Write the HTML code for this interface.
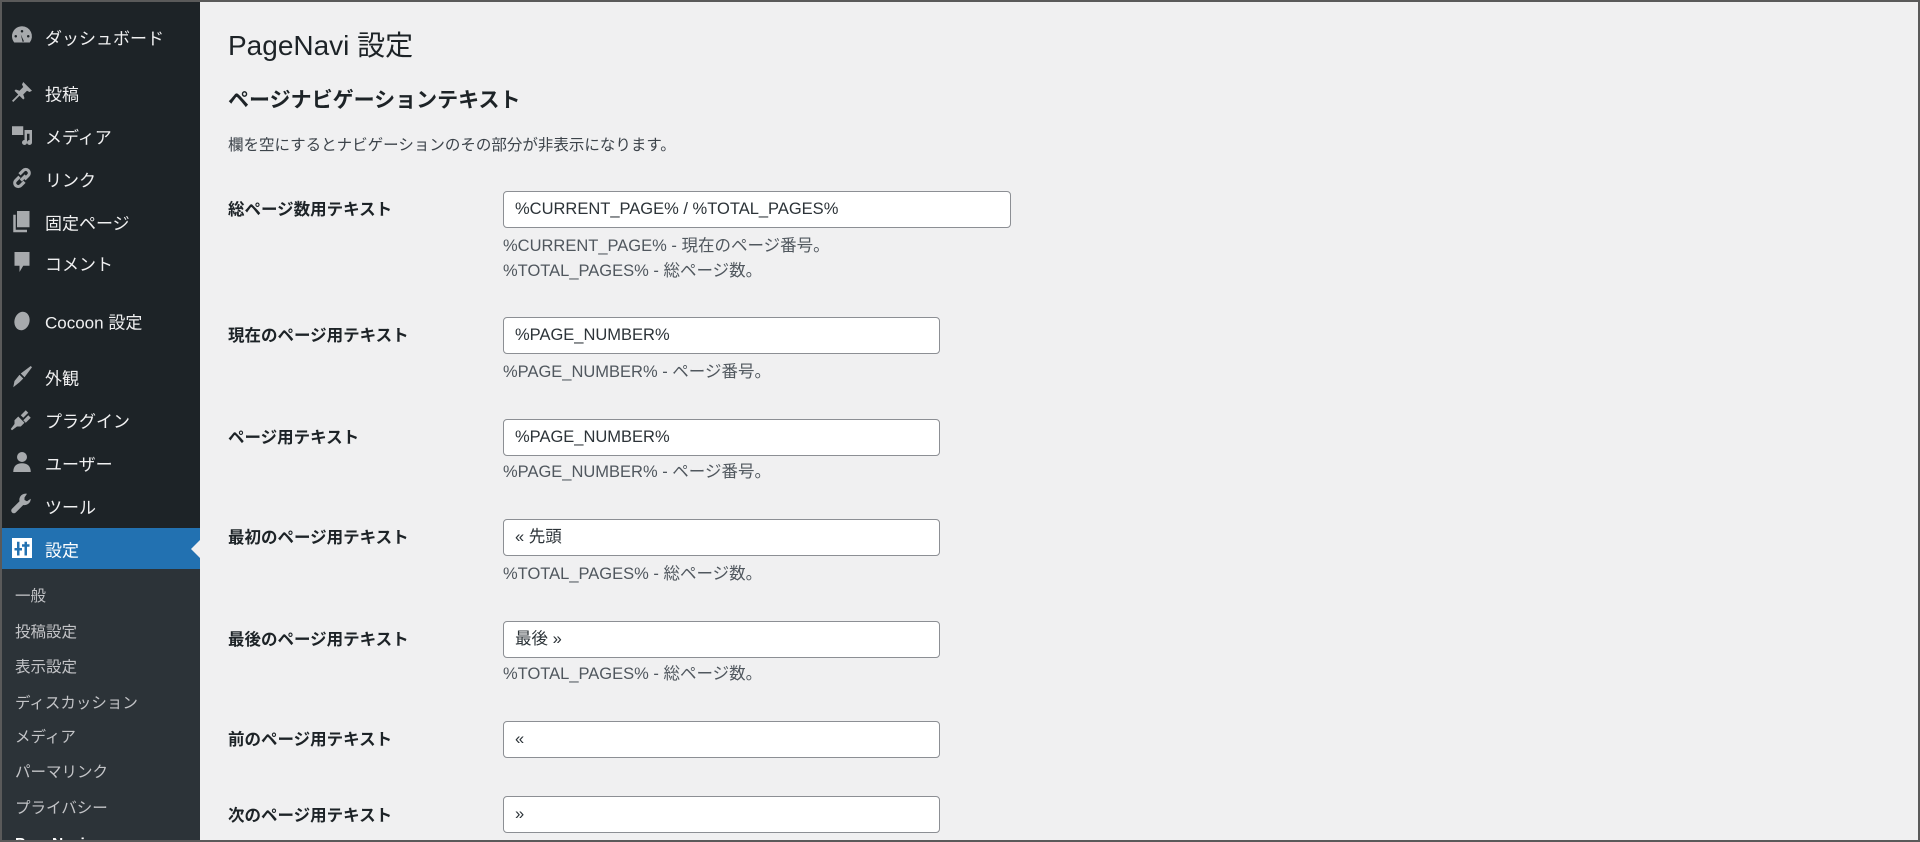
<!DOCTYPE html>
<html style="overflow:hidden;height:842px"><head><meta charset="utf-8"><style>
*{margin:0;padding:0;box-sizing:border-box}
html,body{width:1920px;height:842px;overflow:hidden}
body{background:#f0f0f1;font-family:"Liberation Sans","Noto Sans CJK JP",sans-serif}
#wrap{position:relative;width:1920px;height:842px;overflow:hidden}
#frame{position:absolute;inset:0;border:2px solid #5a5a5a;pointer-events:none;z-index:9}
#side{position:absolute;left:0;top:0;width:200px;height:842px;background:#1d2327}
#sub{position:absolute;left:0;top:569px;width:200px;height:273px;background:#2c3338}
#cur{position:absolute;left:0;top:528px;width:200px;height:41px;background:#2271b1}
#cur:after{content:"";position:absolute;right:0;top:12px;border:9px solid transparent;border-right-color:#f0f0f1}
.m{position:absolute;left:45px;font-size:17px;color:#f0f0f1;transform:translateY(-50%);white-space:nowrap}
.ic{position:absolute;left:9px;width:26px;height:25px;transform:translateY(-50%)}
.s{position:absolute;left:15px;font-size:15.5px;color:#c3c4c7;transform:translateY(-50%);white-space:nowrap}
.t{position:absolute;left:228px;transform:translateY(-50%);white-space:nowrap;color:#1d2327}
.lb{font-size:16.5px;font-weight:bold}
.in{position:absolute;left:503px;width:437px;height:37px;background:#fff;border:1px solid #8c8f94;border-radius:4px;font-size:16.5px;color:#2c3338;padding-left:11px;line-height:35px;white-space:nowrap}
.d{position:absolute;left:503px;font-size:16.5px;color:#50575e;transform:translateY(-50%);white-space:nowrap}
</style></head><body><div id="wrap">
<div id="side"></div><div id="sub"></div><div id="cur"></div>
<svg class="ic" style="top:35px" viewBox="0 0 20 20"><path fill="#a7aaad" d="M10 3a8 8 0 0 0-8 8c0 2 .7 3.6 1.8 5h12.4A8 8 0 0 0 10 3zm0 3a1 1 0 1 1 0 2 1 1 0 0 1 0-2zM5 10a1 1 0 1 1 0 2 1 1 0 0 1 0-2zm10 0a1 1 0 1 1 0 2 1 1 0 0 1 0-2zm-4.5 5.5L9 9.5l2.6 5.6z"/></svg>
<div class="m" style="top:37px">ダッシュボード</div>
<svg class="ic" style="top:92px" viewBox="0 0 20 20"><path fill="#a7aaad" d="M11 2l7 7-2 1-2-1-3 3 1 3-1 1-3-3-5 5-1-1 5-5-3-3 1-1 3 1 3-3-1-2z"/></svg>
<div class="m" style="top:93px">投稿</div>
<svg class="ic" style="top:135px" viewBox="0 0 20 20"><path fill="#a7aaad" d="M2 3h9v7H2zM12 6h6v10a2 2 0 1 1-2-2V9h-2v7a2 2 0 1 1-2-2z"/></svg>
<div class="m" style="top:136px">メディア</div>
<svg class="ic" style="top:178px" viewBox="0 0 20 20"><path fill="none" stroke="#a7aaad" stroke-width="2.5" d="M9 12l4-4M8 9l-3 3a2.5 2.5 0 0 0 4 4l3-3M12 11l3-3a2.5 2.5 0 0 0-4-4L8 7"/></svg>
<div class="m" style="top:179px">リンク</div>
<svg class="ic" style="top:221px" viewBox="0 0 20 20"><path fill="#a7aaad" d="M6 2h10v13H6zM3 5h2v12h9v2H3z"/></svg>
<div class="m" style="top:222px">固定ページ</div>
<svg class="ic" style="top:262px" viewBox="0 0 20 20"><path fill="#a7aaad" d="M4 2h12v11h-5l-3 5v-5H4z"/></svg>
<div class="m" style="top:263px">コメント</div>
<svg class="ic" style="top:321px" viewBox="0 0 20 20"><ellipse cx="10" cy="10" rx="6" ry="7.5" fill="#a7aaad" transform="rotate(15 10 10)"/></svg>
<div class="m" style="top:321px">Cocoon 設定</div>
<svg class="ic" style="top:376px" viewBox="0 0 20 20"><path fill="#a7aaad" d="M17 2l1 1-6 8-3-3zM8 9l3 3-3 3-5 4 1-5z"/></svg>
<div class="m" style="top:377px">外観</div>
<svg class="ic" style="top:419px" viewBox="0 0 20 20"><path fill="#a7aaad" d="M13 3l-4 4 2 2 4-4zm2 4l-4 4 2 2 4-4zM7 8l5 5-3 3H6l-4 3-1-1 3-4V11z"/></svg>
<div class="m" style="top:420px">プラグイン</div>
<svg class="ic" style="top:462px" viewBox="0 0 20 20"><circle cx="10" cy="6" r="4" fill="#a7aaad"/><path fill="#a7aaad" d="M3 18c0-5 3-7 7-7s7 2 7 7z"/></svg>
<div class="m" style="top:463px">ユーザー</div>
<svg class="ic" style="top:505px" viewBox="0 0 20 20"><path fill="#a7aaad" d="M17 5l-3 2-2-1 0-2 2-3a5 5 0 0 0-6 6L2 13a2 2 0 0 0 3 3l6-6a5 5 0 0 0 6-5z"/></svg>
<div class="m" style="top:506px">ツール</div>
<svg class="ic" style="top:548px" viewBox="0 0 20 20"><rect x="2" y="2" width="16" height="16" fill="#fff"/><path fill="none" stroke="#2271b1" stroke-width="2" d="M7 5v11M4 11h6M13 5v11M10 8h6"/></svg>
<div class="m" style="top:549px;color:#fff">設定</div>
<div class="s" style="top:595px">一般</div>
<div class="s" style="top:631px">投稿設定</div>
<div class="s" style="top:666px">表示設定</div>
<div class="s" style="top:702px">ディスカッション</div>
<div class="s" style="top:736px">メディア</div>
<div class="s" style="top:771px">パーマリンク</div>
<div class="s" style="top:807px">プライバシー</div>
<div class="s" style="top:845px;color:#fff;font-weight:bold">PageNavi</div>

<div class="t" style="top:44px;font-size:28px">PageNavi 設定</div>
<div class="t" style="top:99px;font-size:21px;font-weight:bold">ページナビゲーションテキスト</div>
<div class="t" style="top:144px;font-size:15.5px;color:#3c434a">欄を空にするとナビゲーションのその部分が非表示になります。</div>

<div class="t lb" style="top:208px">総ページ数用テキスト</div>
<div class="in" style="top:191px;width:508px">%CURRENT_PAGE% / %TOTAL_PAGES%</div>
<div class="d" style="top:244px">%CURRENT_PAGE% - 現在のページ番号。</div>
<div class="d" style="top:269px">%TOTAL_PAGES% - 総ページ数。</div>

<div class="t lb" style="top:334px">現在のページ用テキスト</div>
<div class="in" style="top:317px">%PAGE_NUMBER%</div>
<div class="d" style="top:370px">%PAGE_NUMBER% - ページ番号。</div>

<div class="t lb" style="top:436px">ページ用テキスト</div>
<div class="in" style="top:419px">%PAGE_NUMBER%</div>
<div class="d" style="top:470px">%PAGE_NUMBER% - ページ番号。</div>

<div class="t lb" style="top:536px">最初のページ用テキスト</div>
<div class="in" style="top:519px">« 先頭</div>
<div class="d" style="top:572px">%TOTAL_PAGES% - 総ページ数。</div>

<div class="t lb" style="top:638px">最後のページ用テキスト</div>
<div class="in" style="top:621px">最後 »</div>
<div class="d" style="top:672px">%TOTAL_PAGES% - 総ページ数。</div>

<div class="t lb" style="top:738px">前のページ用テキスト</div>
<div class="in" style="top:721px">«</div>

<div class="t lb" style="top:814px">次のページ用テキスト</div>
<div class="in" style="top:796px">»</div>
<div id="frame"></div>
</div></body></html>
